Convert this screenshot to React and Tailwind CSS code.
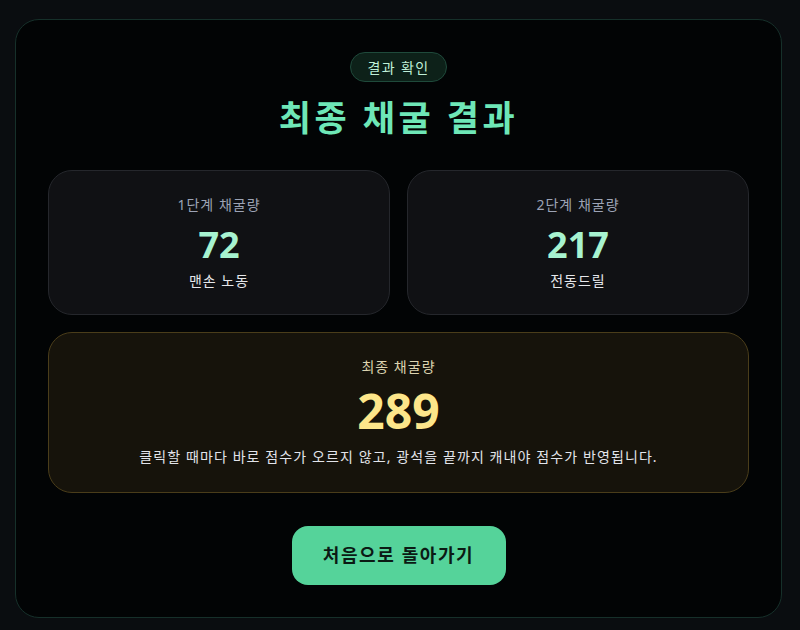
export default function App() {
  return (
    <div
      className="min-h-screen w-full bg-[#0a0d10] pl-[15px] pr-[18px] pt-[19px] pb-[12px]"
      style={{ fontFamily: '"Noto Sans", "Noto Sans CJK KR", sans-serif' }}
    >
      <div className="rounded-[24px] border border-[#16302a] bg-[#020405] px-8 pt-8 pb-8 flex flex-col items-center">
        <span className="rounded-full border border-[#1f4a3b] bg-[#0d2119] px-4 h-[30px] flex items-center text-[14px] tracking-[1.4px] text-[#bff0d8]">
          결과 확인
        </span>
        <h1 className="mt-[14px] text-[35px] leading-[44px] font-bold text-[#6ee7b7] tracking-[3.5px]">
          최종 채굴 결과
        </h1>

        <div className="mt-[30px] grid w-full grid-cols-2 gap-[17px]">
          {[
            { label: '1단계 채굴량', value: 72, note: '맨손 노동' },
            { label: '2단계 채굴량', value: 217, note: '전동드릴' },
          ].map((s) => (
            <div
              key={s.label}
              className="h-[145px] rounded-[24px] border border-[#25272c] bg-[#101114] flex flex-col items-center pt-[24px]"
            >
              <p className="text-[14px] leading-[20px] tracking-[1px] text-[#9ca3b5]">{s.label}</p>
              <p className="mt-[10px] text-[36px] leading-[40px] font-bold text-[#a7f3d0]">{s.value}</p>
              <p className="mt-[6px] text-[14px] leading-[20px] tracking-[1px] text-[#e5e7eb]">{s.note}</p>
            </div>
          ))}
        </div>

        <div className="mt-[17px] h-[161px] w-full rounded-[24px] border border-[#4a3d1a] bg-[#16130b] flex flex-col items-center pt-[24px]">
          <p className="text-[14px] leading-[20px] tracking-[1px] text-[#dcd3b0]">최종 채굴량</p>
          <p className="mt-[6px] text-[48px] leading-[56px] font-bold text-[#fde68a]">289</p>
          <p className="mt-[8px] text-[14px] leading-[20px] tracking-[1.1px] text-[#e2e4ea]">
            클릭할 때마다 바로 점수가 오르지 않고, 광석을 끝까지 캐내야 점수가 반영됩니다.
          </p>
        </div>

        <button className="mt-[33px] h-[59px] w-[214px] rounded-[16px] bg-[#55d39a] text-[18px] font-bold tracking-[1.6px] text-[#0b1a14]">
          처음으로 돌아가기
        </button>
      </div>
    </div>
  );
}
